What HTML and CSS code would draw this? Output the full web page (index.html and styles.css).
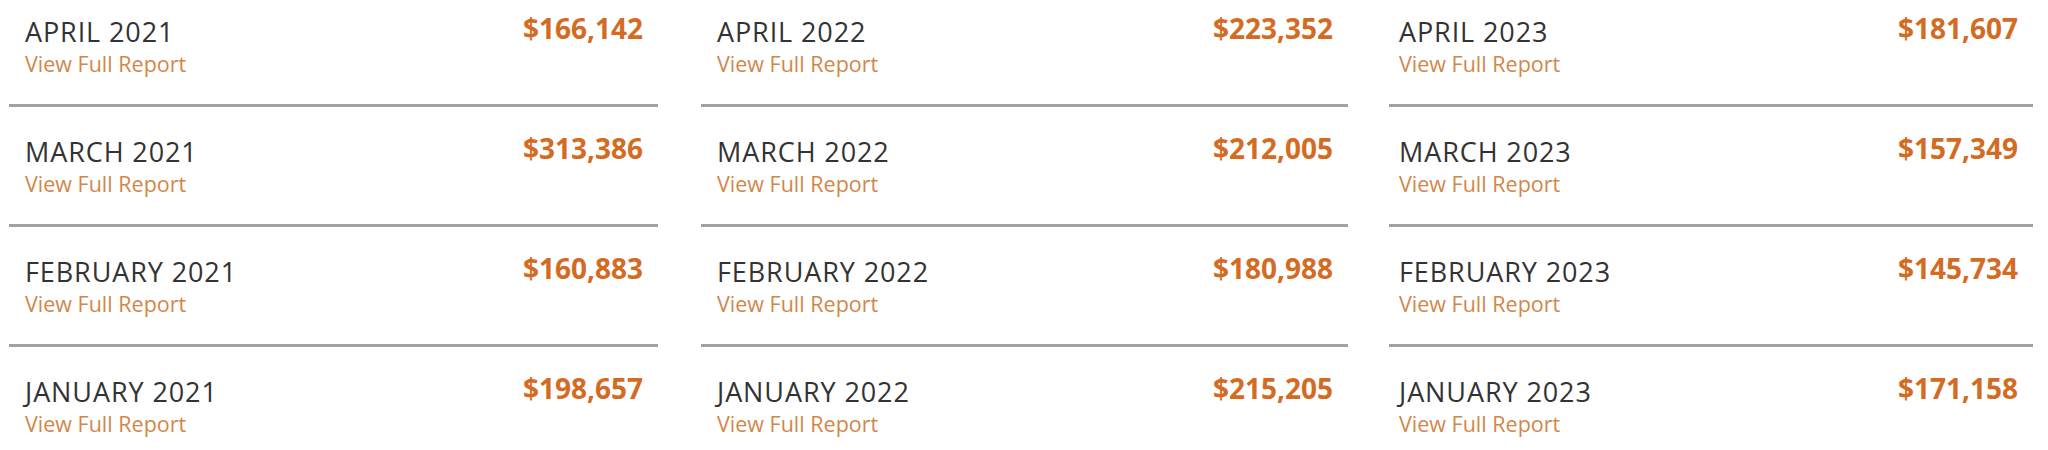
FILE: index.html
```html
<!DOCTYPE html>
<html lang="en">
<head>
<meta charset="utf-8">
<title>Monthly Reports</title>
<link rel="stylesheet" href="styles.css">
</head>
<body>
<main class="reports">
  <section class="col">
    <div class="row"><span class="month">APRIL 2021</span><span class="amount">$166,142</span><a class="link" href="#">View Full Report</a></div>
    <div class="row"><span class="month">MARCH 2021</span><span class="amount">$313,386</span><a class="link" href="#">View Full Report</a></div>
    <div class="row"><span class="month">FEBRUARY 2021</span><span class="amount">$160,883</span><a class="link" href="#">View Full Report</a></div>
    <div class="row"><span class="month">JANUARY 2021</span><span class="amount">$198,657</span><a class="link" href="#">View Full Report</a></div>
  </section>
  <section class="col col--mid">
    <div class="row"><span class="month">APRIL 2022</span><span class="amount">$223,352</span><a class="link" href="#">View Full Report</a></div>
    <div class="row"><span class="month">MARCH 2022</span><span class="amount">$212,005</span><a class="link" href="#">View Full Report</a></div>
    <div class="row"><span class="month">FEBRUARY 2022</span><span class="amount">$180,988</span><a class="link" href="#">View Full Report</a></div>
    <div class="row"><span class="month">JANUARY 2022</span><span class="amount">$215,205</span><a class="link" href="#">View Full Report</a></div>
  </section>
  <section class="col col--last">
    <div class="row"><span class="month">APRIL 2023</span><span class="amount">$181,607</span><a class="link" href="#">View Full Report</a></div>
    <div class="row"><span class="month">MARCH 2023</span><span class="amount">$157,349</span><a class="link" href="#">View Full Report</a></div>
    <div class="row"><span class="month">FEBRUARY 2023</span><span class="amount">$145,734</span><a class="link" href="#">View Full Report</a></div>
    <div class="row"><span class="month">JANUARY 2023</span><span class="amount">$171,158</span><a class="link" href="#">View Full Report</a></div>
  </section>
</main>
</body>
</html>
```

FILE: styles.css
```css
html, body {
  margin: 0;
  padding: 0;
  background: #ffffff;
}

body {
  font-family: "Open Sans", "Liberation Sans", sans-serif;
  overflow: hidden;
}

.reports {
  display: grid;
  grid-template-columns: 649px 649px 644px;
  column-gap: 41px;
  padding-left: 9px;
}

.col {
  display: flex;
  flex-direction: column;
}

.col--mid {
  margin-left: 2px;
}

.row {
  display: grid;
  grid-template-columns: 1fr auto;
  grid-template-areas:
    "month amount"
    "link  .";
  padding: 27px 15px 26px 16px;
  border-bottom: 3px solid #a2a2a2;
}

.row:first-child {
  padding-top: 14px;
}

.col--last .row {
  padding-left: 10px;
}

.month {
  grid-area: month;
  font-size: 27px;
  letter-spacing: 0.9px;
  line-height: 36px;
  color: #333333;
  font-weight: 400;
}

.amount {
  grid-area: amount;
  align-self: start;
  font-size: 28px;
  line-height: 28px;
  font-weight: 700;
  color: #d46b22;
}

.link {
  grid-area: link;
  justify-self: start;
  font-size: 21.5px;
  line-height: 28px;
  color: #d2874a;
  text-decoration: none;
}
```
